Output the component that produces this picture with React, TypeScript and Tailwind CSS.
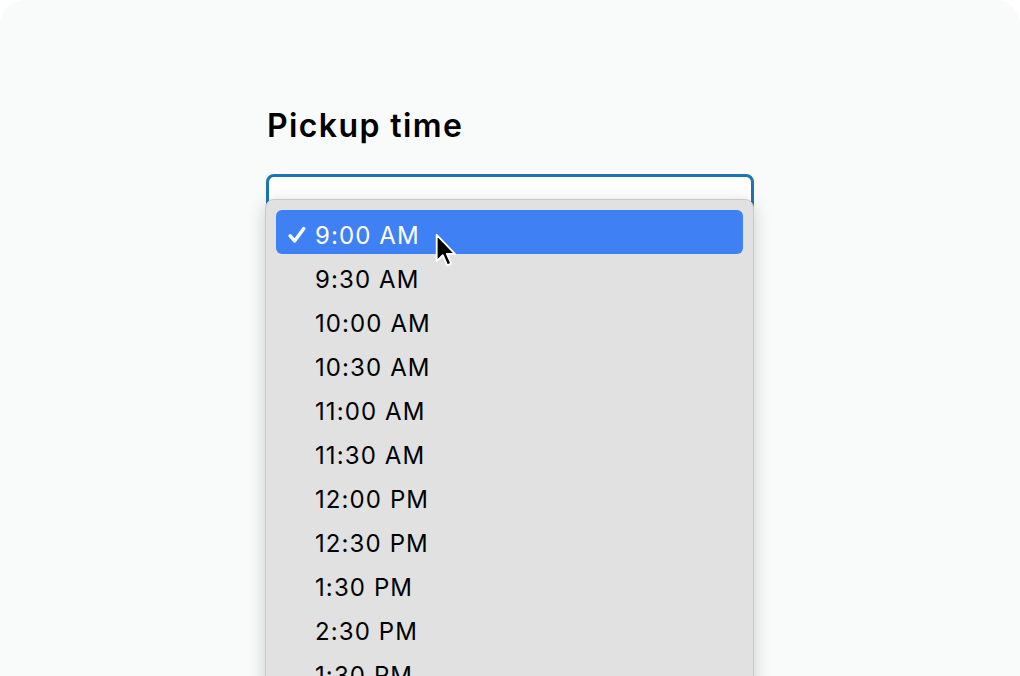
import React from "react";

const times = [
  "9:00 AM",
  "9:30 AM",
  "10:00 AM",
  "10:30 AM",
  "11:00 AM",
  "11:30 AM",
  "12:00 PM",
  "12:30 PM",
  "1:30 PM",
  "2:30 PM",
  "1:30 PM",
];

function Check() {
  return (
    <svg width="18" height="18" viewBox="0 0 18 18" className="shrink-0 mt-[5px]">
      <path
        d="M2.2 9.8 L6.6 15 L15.8 2.6"
        fill="none"
        stroke="white"
        strokeWidth="3.4"
        strokeLinecap="round"
        strokeLinejoin="round"
      />
    </svg>
  );
}

function Cursor() {
  return (
    <svg width="22" height="36" viewBox="0 0 13 21" className="absolute left-[159px] top-[23px]">
      <path
        d="M1 1 L1 16.5 L4.6 13 L7.2 19 L9.6 18 L7 12.2 L11.8 12.2 Z"
        fill="black"
        stroke="white"
        strokeWidth="1.1"
        strokeLinejoin="round"
      />
    </svg>
  );
}

export default function App() {
  const [selected] = React.useState(0);

  return (
    <div className="w-[1020px] h-[676px] bg-white overflow-hidden">
      <div
        className="w-full h-full bg-[#f9fafa] rounded-t-[24px] overflow-hidden pt-[106px] pl-[266px]"
        style={{ fontFamily: "Inter, 'Noto Sans', sans-serif" }}
      >
        <div className="w-[488px]">
          <h2 className="text-[32px] leading-[40px] font-semibold text-black tracking-[1.4px] pl-[1px]">
            Pickup time
          </h2>
          <div className="relative mt-[28px]">
            <div className="h-[50px] bg-white border-[3px] border-[#1c74b0] rounded-[8px]" />
            <div className="absolute left-[-1px] right-0 top-[25px] bg-[#e1e1e1] border border-[#c8c8c8] rounded-[9px] shadow-[0_4px_18px_rgba(0,0,0,0.18)] px-[10px] py-[10px]">
              {times.map((t, i) => (
                <div
                  key={i}
                  className={`relative h-[44px] flex items-center rounded-[6px] pl-[12px] ${
                    i === selected ? "bg-[#3f81f4] text-white" : "text-black"
                  }`}
                >
                  <div className="w-[27px] flex items-center">{i === selected && <Check />}</div>
                  <span className="text-[24px] tracking-[1.1px] pt-[8px]">{t}</span>
                  {i === selected && <Cursor />}
                </div>
              ))}
            </div>
          </div>
        </div>
      </div>
    </div>
  );
}
